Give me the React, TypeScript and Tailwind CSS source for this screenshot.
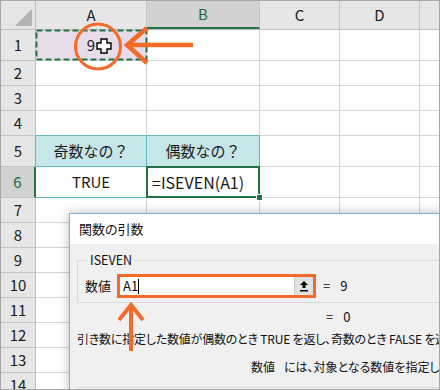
import React from 'react';

const COLS = [
    { key: 'A', w: 'w-[111px]' },
    { key: 'B', w: 'w-[113px]' },
    { key: 'C', w: 'w-[80px]' },
    { key: 'D', w: 'w-[80px]' },
];

const ROWS = [
    { n: 1, h: 'h-[31px]' },
    { n: 2, h: 'h-[25px]' },
    { n: 3, h: 'h-[25px]' },
    { n: 4, h: 'h-[25px]' },
    { n: 5, h: 'h-[31px]' },
    { n: 6, h: 'h-[31px]' },
    { n: 7, h: 'h-[25px]' },
    { n: 8, h: 'h-[25px]' },
    { n: 9, h: 'h-[25px]' },
    { n: 10, h: 'h-[25px]' },
    { n: 11, h: 'h-[25px]' },
    { n: 12, h: 'h-[25px]' },
    { n: 13, h: 'h-[25px]' },
    { n: 14, h: 'h-[25px]' },
];

function cellClass(col: string, row: number) {
    const teal = 'border-[#62b7c0]';
    if ((col === 'A' || col === 'B') && (row === 4 || row === 5 || row === 6)) {
        if (row === 4) return `border-r border-b border-r-[#d4d4d4] border-b-[#62b7c0]`;
        return `border-r border-b ${teal}`;
    }
    return 'border-r border-b border-[#d4d4d4]';
}

function CellContent({ col, row }: { col: string; row: number }) {
    if (col === 'A' && row === 1) {
        return (
            <>
                <div className="absolute inset-0 bg-[#e9dcea]" />
                <svg className="absolute -inset-px" width="113" height="32">
                    <rect x="1.5" y="1.5" width="110" height="29" fill="none" stroke="#217346" strokeWidth="2" strokeDasharray="6 3" />
                </svg>
                <span className="relative text-[15px]">9</span>
            </>
        );
    }
    if (row === 5 && col === 'A') {
        return <><div className="absolute inset-0 bg-[#c6e7ea]" /><span className="relative text-[15px]">奇数なの？</span></>;
    }
    if (row === 5 && col === 'B') {
        return <><div className="absolute inset-0 bg-[#c6e7ea]" /><span className="relative text-[15px]">偶数なの？</span></>;
    }
    if (row === 6 && col === 'A') {
        return <span className="text-[15px]">TRUE</span>;
    }
    if (row === 6 && col === 'B') {
        return (
            <>
                <span className="w-full pl-[5px] text-[16px] text-left">=ISEVEN(A1)</span>
                <div className="absolute -inset-px border-2 border-[#217346] z-10" />
                <div className="absolute -right-[4px] -bottom-[4px] w-[7px] h-[7px] bg-[#217346] border border-white z-20" />
            </>
        );
    }
    return null;
}

export default function App() {
    return (
        <div className="relative w-[440px] h-[390px] overflow-hidden border border-[#a6a6a6] bg-white font-['Noto_Sans_CJK_JP',sans-serif] text-[#1a1a1a]">
            {/* column header */}
            <div className="flex h-[29px] bg-[#e6e6e6] border-b border-[#bdbdbd]">
                <div className="w-[35px] border-r border-[#bdbdbd] flex items-end justify-end p-[3px]">
                    <div className="w-0 h-0 border-l-[17px] border-l-transparent border-b-[17px] border-b-[#b3b3b3]" />
                </div>
                {COLS.map((c) => (
                    <div
                        key={c.key}
                        className={`${c.w} flex items-center justify-center text-[15px] border-r border-[#c6c6c6] ${
                            c.key === 'B' ? 'bg-[#d2d2d2] text-[#1e6b41] border-b-2 border-b-[#217346]' : ''
                        }`}
                    >
                        {c.key}
                    </div>
                ))}
                <div className="flex-1" />
            </div>

            {ROWS.map((r) => (
                <div key={r.n} className={`flex ${r.h}`}>
                    <div
                        className={`w-[35px] flex items-center justify-center text-[15px] border-b border-[#c6c6c6] ${
                            r.n === 6
                                ? 'bg-[#d2d2d2] text-[#1e6b41] border-r-2 border-r-[#217346]'
                                : r.n === 5
                                  ? 'bg-[#e6e6e6] border-r border-r-[#62b7c0]'
                                  : 'bg-[#e6e6e6] border-r border-r-[#bdbdbd]'
                        }`}
                    >
                        {r.n}
                    </div>
                    {COLS.map((c) => (
                        <div key={c.key} className={`${c.w} relative flex items-center justify-center ${cellClass(c.key, r.n)}`}>
                            <CellContent col={c.key} row={r.n} />
                        </div>
                    ))}
                    <div className="flex-1 border-b border-[#d4d4d4]" />
                </div>
            ))}

            {/* 関数の引数 dialog */}
            <div className="absolute left-[68px] top-[212px] w-[390px] h-[200px] border border-[#7ab0e2] bg-[#f0f0f0] shadow-[0_0_10px_rgba(0,0,0,0.28)] z-30 flex flex-col font-['Noto_Sans_CJK_JP',sans-serif] [font-feature-settings:'palt'] text-[13px] text-[#111]">
                <div className="h-[30px] shrink-0 bg-white flex items-center pl-[9px]">関数の引数</div>
                <fieldset className="shrink-0 ml-[7px] mt-[8px] border border-[#d9d9d9] pl-[7px] pb-[4px] pt-[6px]">
                    <legend className="ml-[3px] px-[2px] text-[12.5px] leading-[16px]">ISEVEN</legend>
                    <div className="flex items-center h-[24px]">
                        <span className="w-[32px]">数値</span>
                        <div className="w-[199px] h-[24px] border-[3px] border-[#f26b2b] bg-white flex items-center">
                            <span className="pl-[3px] text-[13px]">A1</span>
                            <span className="w-px h-[15px] bg-black" />
                            <div className="ml-auto w-[19px] h-full bg-[#e1e1e1] border-l border-[#c8c8c8] flex items-center justify-center">
                                <svg width="10" height="12" viewBox="0 0 10 12">
                                    <path d="M5 1 L1 5 H3.5 V8 H6.5 V5 H9 Z" fill="#000" />
                                    <rect x="1" y="10" width="8" height="1.5" fill="#000" />
                                </svg>
                            </div>
                        </div>
                        <span className="ml-[7px]">=</span>
                        <span className="ml-[10px]">9</span>
                    </div>
                </fieldset>
                <div className="shrink-0 flex h-[24px] pt-[4px] items-center pl-[256px]">
                    <span>=</span>
                    <span className="ml-[10px]">0</span>
                </div>
                <div className="shrink-0 mt-[2px] h-[20px] flex items-center pl-[7px] whitespace-nowrap text-[12px] tracking-[-0.2px]">
                    引き数に指定した数値が偶数のとき TRUE を返し、奇数のとき FALSE を返します。
                </div>
                <div className="shrink-0 mt-[8px] h-[20px] flex items-center pl-[181px] whitespace-nowrap text-[12px]">
                    <span>数値</span>
                    <span className="ml-[9px]">には、対象となる数値を指定します。</span>
                </div>
                <div className="shrink-0 mt-[10px] ml-[7px] border-t border-[#d9d9d9]" />
            </div>

            {/* annotations */}
            <svg className="absolute left-0 top-0 z-40 pointer-events-none" width="440" height="390">
                <path d="M100 38 h6 v4 h4 v6 h-4 v4 h-6 v-4 h-4 v-6 h4 z" fill="#fff" stroke="#000" strokeWidth="1.4" />
                <circle cx="97" cy="45.5" r="22.5" fill="none" stroke="#f26b2b" strokeWidth="3" />
                <path d="M192 44 H127" stroke="#f26b2b" strokeWidth="4.5" />
                <path d="M146 27 L126 44 L146 62" fill="none" stroke="#f26b2b" strokeWidth="4.5" />
                <path d="M130 350 V305" stroke="#f26b2b" strokeWidth="4" />
                <path d="M118 319 L130 304 L142 319" fill="none" stroke="#f26b2b" strokeWidth="4" />
            </svg>
        </div>
    );
}
